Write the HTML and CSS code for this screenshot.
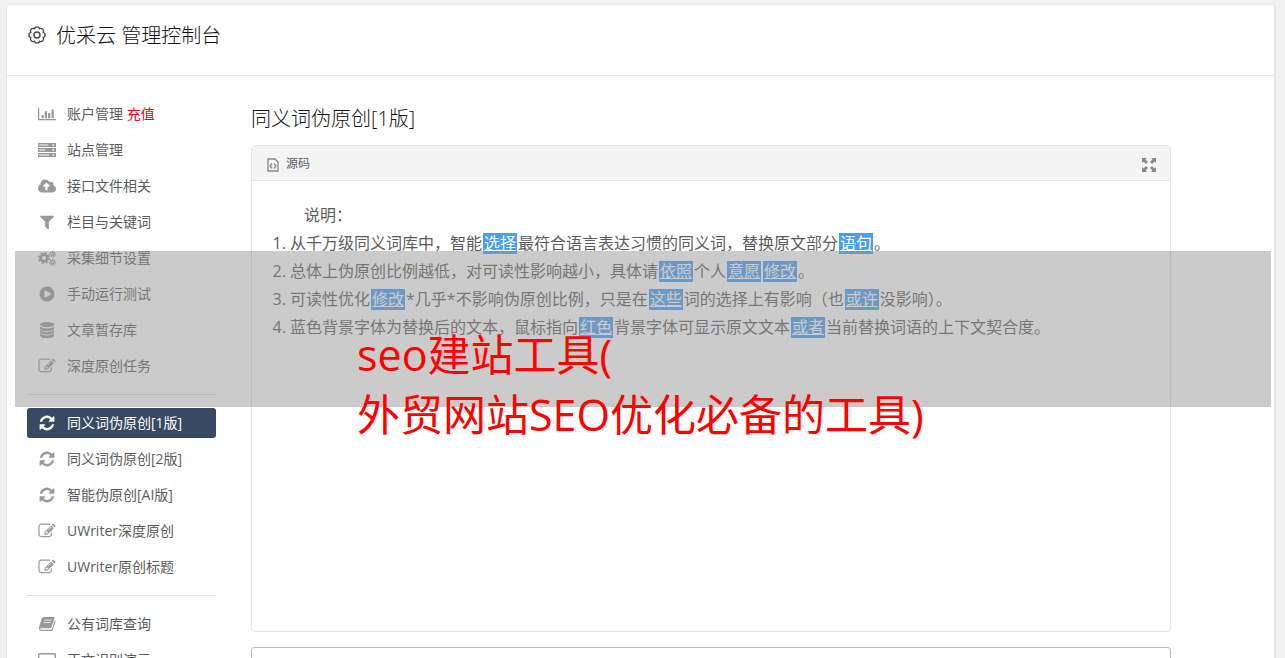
FILE: index.html
```html
<!DOCTYPE html>
<html lang="zh-CN">
<head>
    <meta charset="UTF-8">
    <meta name="viewport" content="width=device-width, initial-scale=1.0">
    <title>优采云 管理控制台</title>
    <link rel="stylesheet" href="styles.css">
</head>
<body>
    <!-- shared icons -->
    <svg class="sprite" aria-hidden="true">
        <symbol id="i-chart" viewBox="0 0 20 16">
            <path d="M0 1h1.4v12.6H20V15H0zM4 9h2.400v3.6H4zM7.5 5h2.500v7.6H7.5zM11.200 7h2.500v5.6h-2.500zM15 3h2.500v9.6H15z"/>
        </symbol>
        <symbol id="i-server" viewBox="0 0 18 16">
            <path fill-rule="evenodd" d="M0 1h18v4H0zM1.2 2.4v1.2h9V2.4zM14.5 2.3v1.4h1.6V2.3zM0 6h18v4H0zM1.2 7.4v1.2h6V7.4zM14.5 7.3v1.4h1.6V7.3zM0 11h18v4H0zM1.2 12.4v1.2h10v-1.2zM14.5 12.3v1.4h1.6v-1.4z"/>
        </symbol>
        <symbol id="i-cloud" viewBox="0 0 1920 1664">
            <path d="M1280 864q0-14-9-23l-352-352q-9-9-23-9t-23 9l-351 351q-10 12-10 24 0 14 9 23t23 9h224v352q0 13 9.500 22.500t22.500 9.500h192q13 0 22.500-9.500t9.500-22.500v-352h224q13 0 22.500-9.500t9.500-22.500zm640 288q0 159-112.500 271.500t-271.500 112.500h-1088q-185 0-316.500-131.500t-131.500-316.500q0-130 70-240t188-165q-2-30-2-43 0-212 150-362t362-150q156 0 285.500 87t188.500 231q71-62 166-62 106 0 181 75t75 181q0 76-41 138 130 31 213.500 135.500t83.500 238.500z"/>
        </symbol>
        <symbol id="i-filter" viewBox="64 64 1664 1664">
            <path d="M1595 295q17 41-14 70l-493 493v742q0 42-39 59-13 5-25 5-27 0-45-19l-256-256q-19-19-19-45v-486l-493-493q-31-29-14-70 17-39 59-39h1280q42 0 59 39z"/>
        </symbol>
        <symbol id="i-cogs" viewBox="0 0 18 16">
            <g fill="none" stroke="currentColor">
                <circle cx="6" cy="8" r="3.400" stroke-width="2.600"/>
                <circle cx="6" cy="8" r="5.200" stroke-width="1.600" stroke-dasharray="2.040 2.040"/>
                <circle cx="14.500" cy="4" r="1.700" stroke-width="1.200"/>
                <circle cx="14.500" cy="4" r="2.800" stroke-width="1.200" stroke-dasharray="1.250 1.250"/>
                <circle cx="14.500" cy="12.200" r="1.700" stroke-width="1.200"/>
                <circle cx="14.500" cy="12.200" r="2.800" stroke-width="1.200" stroke-dasharray="1.250 1.250"/>
            </g>
        </symbol>
        <symbol id="i-play" viewBox="64 64 1664 1664">
            <path fill-rule="evenodd" d="M896 128q209 0 385.500 103t279.500 279.500 103 385.500-103 385.500-279.500 279.500-385.500 103-385.500-103-279.500-279.500-103-385.500 103-385.500 279.500-279.500 385.500-103zm384 823q32-18 32-55t-32-55l-544-320q-31-19-64-1-32 19-32 56v640q0 37 32 56 16 8 32 8 17 0 32-9z"/>
        </symbol>
        <symbol id="i-database" viewBox="0 0 18 16">
            <ellipse cx="9" cy="2.600" rx="7" ry="2.600"/>
            <path d="M2 4.600q2 1.900 7 1.900t7-1.900v1.800Q15.500 9 9 9T2 6.400zM2 8.100Q4 10 9 10t7-1.900v1.800q-.5 2.600-7 2.600T2 9.900zM2 11.600q2 1.900 7 1.900t7-1.900v1.800Q15.500 16 9 16t-7-2.600z"/>
        </symbol>
        <symbol id="i-edit" viewBox="0 64 1792 1664">
            <path d="M888 1184l116-116-152-152-116 116v56h96v96h56zm440-720q-16-16-33 1l-350 350q-17 17-1 33t33-1l350-350q17-17 1-33zm80 594v190q0 119-84.500 203.500t-203.500 84.500h-832q-119 0-203.500-84.500t-84.500-203.500v-832q0-119 84.500-203.500t203.500-84.500h832q63 0 117 25 15 7 18 23 3 17-9 29l-49 49q-14 14-32 8-23-6-45-6h-832q-66 0-113 47t-47 113v832q0 66 47 113t113 47h832q66 0 113-47t47-113v-126q0-13 9-22l64-64q15-15 35-7t20 29zm-96-738l288 288-672 672h-288v-288zm444 132l-92 92-288-288 92-92q28-28 68-28t68 28l152 152q28 28 28 68t-28 68z"/>
        </symbol>
        <symbol id="i-refresh" viewBox="-64 -64 1664 1664">
            <path d="M1511 928q0 5-1 7-64 268-268 434.500t-478 166.500q-146 0-282.500-55t-243.500-157l-129 129q-19 19-45 19t-45-19-19-45v-448q0-26 19-45t45-19h448q26 0 45 19t19 45-19 45l-137 137q71 66 161 102t187 36q134 0 250-65t186-179q11-17 53-117 8-23 30-23h192q13 0 22.500 9.500t9.500 22.500zm25-800v448q0 26-19 45t-45 19h-448q-26 0-45-19t-19-45 19-45l138-138q-148-137-349-137-134 0-250 65t-186 179q-11 17-53 117-8 23-30 23h-199q-13 0-22.500-9.500t-9.500-22.500v-7q65-268 270-434.500t480-166.500q146 0 284 55.500t245 156.500l130-129q19-19 45-19t45 19 19 45z"/>
        </symbol>
        <symbol id="i-book" viewBox="0 0 18 16">
            <path fill-rule="evenodd" d="M6 1h9.500q1.300 0 .9 1.300L13.600 11q-.4 1.200-1.600 1.200H3q-1 0-.9.700.1.800 1.200.8h9.500q.8 0 1.100-.8L16.800 4q1 .4.700 1.500l-2.800 8.400Q14.300 15 13 15H3.500Q1 15 .8 12.600q0-.8.300-1.600L3.800 2.600Q4.300 1 6 1zm.7 2.700-.3.900h7l.3-.9zm-.9 2.500-.3.900h7l.3-.9z"/>
        </symbol>
        <symbol id="i-screen" viewBox="0 0 18 16">
            <path fill-rule="evenodd" d="M1.500 1h15Q18 1 18 2.500v9q0 1.500-1.500 1.500H11v1.500h2v1H5v-1h2V13H1.500Q0 13 0 11.500v-9Q0 1 1.500 1zm-.1 1.400v9.200h15.200V2.400z"/>
        </symbol>
    </svg>

    <div class="page">
        <header class="page-header">
            <svg class="gear" viewBox="0 0 20 20">
                <path d="M7.400 3.700a2.750 2.750 0 0 1 5.200 0 2.750 2.750 0 0 1 3.700 3.700 2.750 2.750 0 0 1 0 5.200 2.750 2.750 0 0 1-3.700 3.700 2.750 2.750 0 0 1-5.200 0 2.750 2.750 0 0 1-3.700-3.700 2.750 2.750 0 0 1 0-5.200 2.750 2.750 0 0 1 3.700-3.700z"/>
                <circle cx="10" cy="10" r="3"/>
            </svg>
            <h1>优采云 管理控制台</h1>
        </header>

        <div class="layout">
            <nav class="sidebar">
                <ul class="menu">
                    <li><a href="#"><svg class="icon"><use href="#i-chart"/></svg><span>账户管理 <em>充值</em></span></a></li>
                    <li><a href="#"><svg class="icon"><use href="#i-server"/></svg>站点管理</a></li>
                    <li><a href="#"><svg class="icon"><use href="#i-cloud"/></svg>接口文件相关</a></li>
                    <li><a href="#"><svg class="icon"><use href="#i-filter"/></svg>栏目与关键词</a></li>
                    <li><a href="#"><svg class="icon"><use href="#i-cogs"/></svg>采集细节设置</a></li>
                    <li><a href="#"><svg class="icon"><use href="#i-play"/></svg>手动运行测试</a></li>
                    <li><a href="#"><svg class="icon"><use href="#i-database"/></svg>文章暂存库</a></li>
                    <li><a href="#"><svg class="icon"><use href="#i-edit"/></svg>深度原创任务</a></li>
                </ul>
                <ul class="menu">
                    <li><a href="#" class="active"><svg class="icon"><use href="#i-refresh"/></svg>同义词伪原创[1版]</a></li>
                    <li><a href="#"><svg class="icon"><use href="#i-refresh"/></svg>同义词伪原创[2版]</a></li>
                    <li><a href="#"><svg class="icon"><use href="#i-refresh"/></svg>智能伪原创[AI版]</a></li>
                    <li><a href="#"><svg class="icon"><use href="#i-edit"/></svg>UWriter深度原创</a></li>
                    <li><a href="#"><svg class="icon"><use href="#i-edit"/></svg>UWriter原创标题</a></li>
                </ul>
                <ul class="menu">
                    <li><a href="#"><svg class="icon"><use href="#i-book"/></svg>公有词库查询</a></li>
                    <li><a href="#"><svg class="icon"><use href="#i-screen"/></svg>正文识别演示</a></li>
                </ul>
            </nav>

            <main class="content">
                <h2>同义词伪原创[1版]</h2>
                <div class="editor">
                    <div class="toolbar">
                        <button type="button" class="tool">
                            <svg class="tool-icon" viewBox="0 0 12 14">
                                <path d="M1 1h7l3 3v9H1z"/>
                                <path d="M5 5.500 3 8l2 2.500M7 5.500 9 8l-2 2.500"/>
                            </svg>
                            源码
                        </button>
                        <button type="button" class="tool" aria-label="全屏">
                            <svg class="expand" viewBox="0 0 14 14">
                                <path d="M0 0h5L3.500 1.500l2.500 2.500L4 6 1.500 3.500 0 5zM14 0v5l-1.500-1.500L10 6 8 4l2.500-2.500L9 0zM0 14V9l1.500 1.500L4 8l2 2-2.500 2.500L5 14zM14 14H9l1.500-1.500L8 10l2-2 2.500 2.500L14 9z"/>
                            </svg>
                        </button>
                    </div>
                    <div class="editor-body">
                        <p>说明：</p>
                        <ol>
                            <li>从千万级同义词库中，智能<u>选择</u>最符合语言表达习惯的同义词，替换原文部分<u>语句</u>。</li>
                            <li>总体上伪原创比例越低，对可读性影响越小，具体请<u>依照</u>个人<u>意愿</u><u>修改</u>。</li>
                            <li>可读性优化<u>修改</u>*几乎*不影响伪原创比例，只是在<u>这些</u>词的选择上有影响（也<u>或许</u>没影响）。</li>
                            <li>蓝色背景字体为替换后的文本，鼠标指向<u>红色</u>背景字体可显示原文文本<u>或者</u>当前替换词语的上下文契合度。</li>
                        </ol>
                    </div>
                </div>
                <textarea class="source" aria-label="原文"></textarea>
            </main>
        </div>
    </div>

    <div class="banner">
        <p>seo建站工具(<br>外贸网站SEO优化必备的工具)</p>
    </div>
</body>
</html>
```
FILE: styles.css
```css
* {
    box-sizing: border-box;
}
body {
    margin: 0;
    padding: 4px 9px 0 6px;
    background-color: #f1f1f1;
    color: #5c5c5c;
    font-family: "Open Sans", "Noto Sans CJK SC", sans-serif;
    font-size: 14px;
    position: relative;
}
h1, h2, p, ul, ol {
    margin: 0;
    padding: 0;
    font-weight: normal;
}
.sprite {
    display: none;
}
.page {
    background-color: #fff;
    border: 1px solid #e5e5e5;
    border-right-width: 2px;
    border-radius: 4px;
}
.page-header {
    display: flex;
    align-items: flex-start;
    gap: 9px;
    height: 71px;
    padding: 16px 20px 0;
    border-bottom: 1px solid #e5e5e5;
}
.page-header h1 {
    font-size: 20px;
    font-weight: 300;
    line-height: 30px;
    color: #111;
}
.gear {
    width: 20px;
    height: 28px;
    fill: none;
    stroke: #444;
    stroke-width: 1.4;
}
.layout {
    display: flex;
    gap: 35px;
    padding: 23px 20px 0;
}

/* Sidebar */
.sidebar {
    flex: 0 0 189px;
}
.menu {
    list-style: none;
    display: flex;
    flex-direction: column;
    gap: 6px;
}
.menu + .menu {
    margin-top: 13px;
    padding-top: 13px;
    border-top: 1px solid #ddd;
}
.menu a {
    display: flex;
    align-items: center;
    gap: 11px;
    height: 30px;
    padding: 0 11px 2px;
    border-radius: 3px;
    color: #5c5c5c;
    text-decoration: none;
    white-space: nowrap;
}
.menu em {
    font-style: normal;
    color: #f00;
}
.menu .active {
    background-color: #394963;
    color: #fff;
}
.icon {
    width: 18px;
    height: 16px;
    margin-top: 2px;
    color: #999;
    fill: currentColor;
}
.active .icon {
    color: #fff;
}

/* Editor */
.content {
    flex: 1;
    min-width: 0;
    max-width: 920px;
}
.content h2 {
    padding: 5px 0 11px;
    font-size: 20px;
    font-weight: 300;
    line-height: 30px;
    color: #111;
}
.editor {
    border: 1px solid #e5e5e5;
    border-radius: 4px;
}
.toolbar {
    display: flex;
    justify-content: space-between;
    align-items: center;
    height: 35px;
    padding: 0 14px;
    background-color: #f4f4f4;
    border-bottom: 1px solid #e5e5e5;
}
.tool {
    display: flex;
    align-items: center;
    gap: 6px;
    padding: 0;
    border: none;
    background: none;
    color: #5c5c5c;
    font-family: inherit;
    font-size: 12px;
    cursor: pointer;
}
.tool-icon,
.expand {
    width: 14px;
    height: 14px;
    margin-top: 3px;
}
.tool-icon {
    fill: none;
    stroke: #888;
    stroke-width: 1.3;
}
.expand {
    fill: #888;
}
.editor-body {
    min-height: 450px;
    padding: 20px;
    font-size: 16px;
    line-height: 28px;
}
.editor-body p {
    text-indent: 2em;
}
.editor-body ol {
    padding-left: 18px;
}
.editor-body u {
    margin: 0 1px;
    padding: 0 1px;
    /* gradient keeps the highlight shorter than the glyph box */
    background: linear-gradient(#499df5, #499df5) center / 100% 21px no-repeat;
    color: #fff;
}
.source {
    display: block;
    width: 100%;
    height: 160px;
    margin-top: 15px;
    border: 1px solid #bbb;
    border-radius: 3px;
    resize: none;
}

/* Title strip over the page */
.banner {
    position: absolute;
    top: 251px;
    left: 15px;
    right: 14px;
    height: 156px;
    padding: 74px 0 0 342px;
    background-color: rgba(146, 146, 146, 0.48);
    color: #f00;
    font-size: 43px;
    line-height: 60px;
    white-space: nowrap;
}
```
